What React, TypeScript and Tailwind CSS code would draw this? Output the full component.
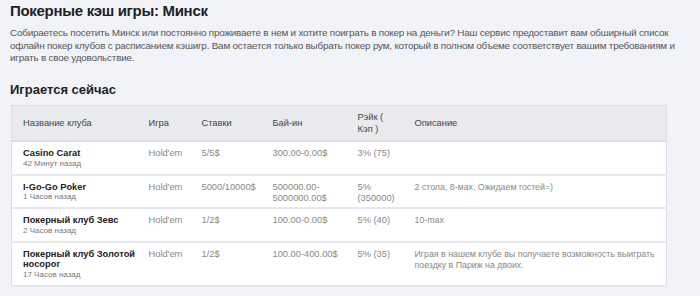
import React from 'react';

interface Club {
  name: string;
  ago: string;
  game: string;
  stakes: string;
  buyin: string;
  rake: string;
  description: string;
}

const CLUBS: Club[] = [
  { name: 'Casino Carat', ago: '42 Минут назад', game: "Hold'em", stakes: '5/5$', buyin: '300.00-0.00$', rake: '3% (75)', description: '' },
  { name: 'I-Go-Go Poker', ago: '1 Часов назад', game: "Hold'em", stakes: '5000/10000$', buyin: '500000.00-5000000.00$', rake: '5% (350000)', description: '2 стола, 8-мах. Ожидаем гостей=)' },
  { name: 'Покерный клуб Зевс', ago: '2 Часов назад', game: "Hold'em", stakes: '1/2$', buyin: '100.00-0.00$', rake: '5% (40)', description: '10-max' },
  { name: 'Покерный клуб Золотой носорог', ago: '17 Часов назад', game: "Hold'em", stakes: '1/2$', buyin: '100.00-400.00$', rake: '5% (35)', description: 'Играя в нашем клубе вы получаете возможность выиграть поездку в Париж на двоих.' },
];

export default function App() {
  return (
    <div className="min-h-[296px] bg-[#f1f3f8] px-[10px] pt-[1px] [font-family:'Liberation_Sans',Arial,sans-serif] text-[#333]">
      {/* Header */}
      <h1 className="text-[15px] font-bold leading-[20px] tracking-[-0.3px] text-[#222]">Покерные кэш игры: Минск</h1>
      <p className="mt-[6px] whitespace-nowrap text-[9.9px] leading-[12.5px] tracking-[-0.2px] text-[#555]">
        Собираетесь посетить Минск или постоянно проживаете в нем и хотите поиграть в покер на деньги? Наш сервис предоставит вам обширный список
        <br />
        офлайн покер клубов с расписанием кэшигр. Вам остается только выбрать покер рум, который в полном объеме соответствует вашим требованиям и
        <br />
        играть в свое удовольствие.
      </p>

      <h2 className="mt-[16px] text-[13px] font-bold leading-[18px] text-[#222]">Играется сейчас</h2>

      {/* Table */}
      <table className="mt-[6px] ml-[1px] w-[656px] table-fixed border-collapse border border-[#dcdde3] bg-white">
        <colgroup>
          <col className="w-[126px]" />
          <col className="w-[53px]" />
          <col className="w-[71px]" />
          <col className="w-[85px]" />
          <col className="w-[57px]" />
          <col />
        </colgroup>
        <thead>
          <tr className="h-[36px] border-b-2 border-[#dcdde3] bg-[#e9eaee] text-left text-[9.3px] leading-[12px] text-[#444]">
            <th className="pl-[11px] pr-[4px] font-normal">Название клуба</th>
            <th className="pl-[11px] pr-[4px] font-normal">Игра</th>
            <th className="pl-[11px] pr-[4px] font-normal">Ставки</th>
            <th className="pl-[11px] pr-[4px] font-normal">Бай-ин</th>
            <th className="pl-[11px] pr-[12px] font-normal">Рэйк ( Кэп )</th>
            <th className="pl-[11px] pr-[4px] font-normal">Описание</th>
          </tr>
        </thead>
        <tbody>
          {CLUBS.map((c) => (
            <tr key={c.name} className="border-b-2 border-[#e8e9ee] align-top text-[9.3px] leading-[11px] text-[#888]">
              <td className="pl-[11px] pr-[2px] pt-[6px] pb-[5px]">
                <div className="text-[9.3px] leading-[10.5px] font-bold text-[#222]">{c.name}</div>
                <div className="text-[8px] leading-[10px] text-[#777]">{c.ago}</div>
              </td>
              <td className="pl-[11px] pr-[4px] pt-[6px]">{c.game}</td>
              <td className="pl-[11px] pr-[4px] pt-[6px]">{c.stakes}</td>
              <td className="pl-[11px] pr-[8px] pt-[6px] break-words">{c.buyin}</td>
              <td className="pl-[11px] pr-[8px] pt-[6px]">{c.rake}</td>
              <td className="pl-[11px] pr-[4px] pt-[6px] text-[8.8px]">{c.description}</td>
            </tr>
          ))}
        </tbody>
      </table>
    </div>
  );
}
